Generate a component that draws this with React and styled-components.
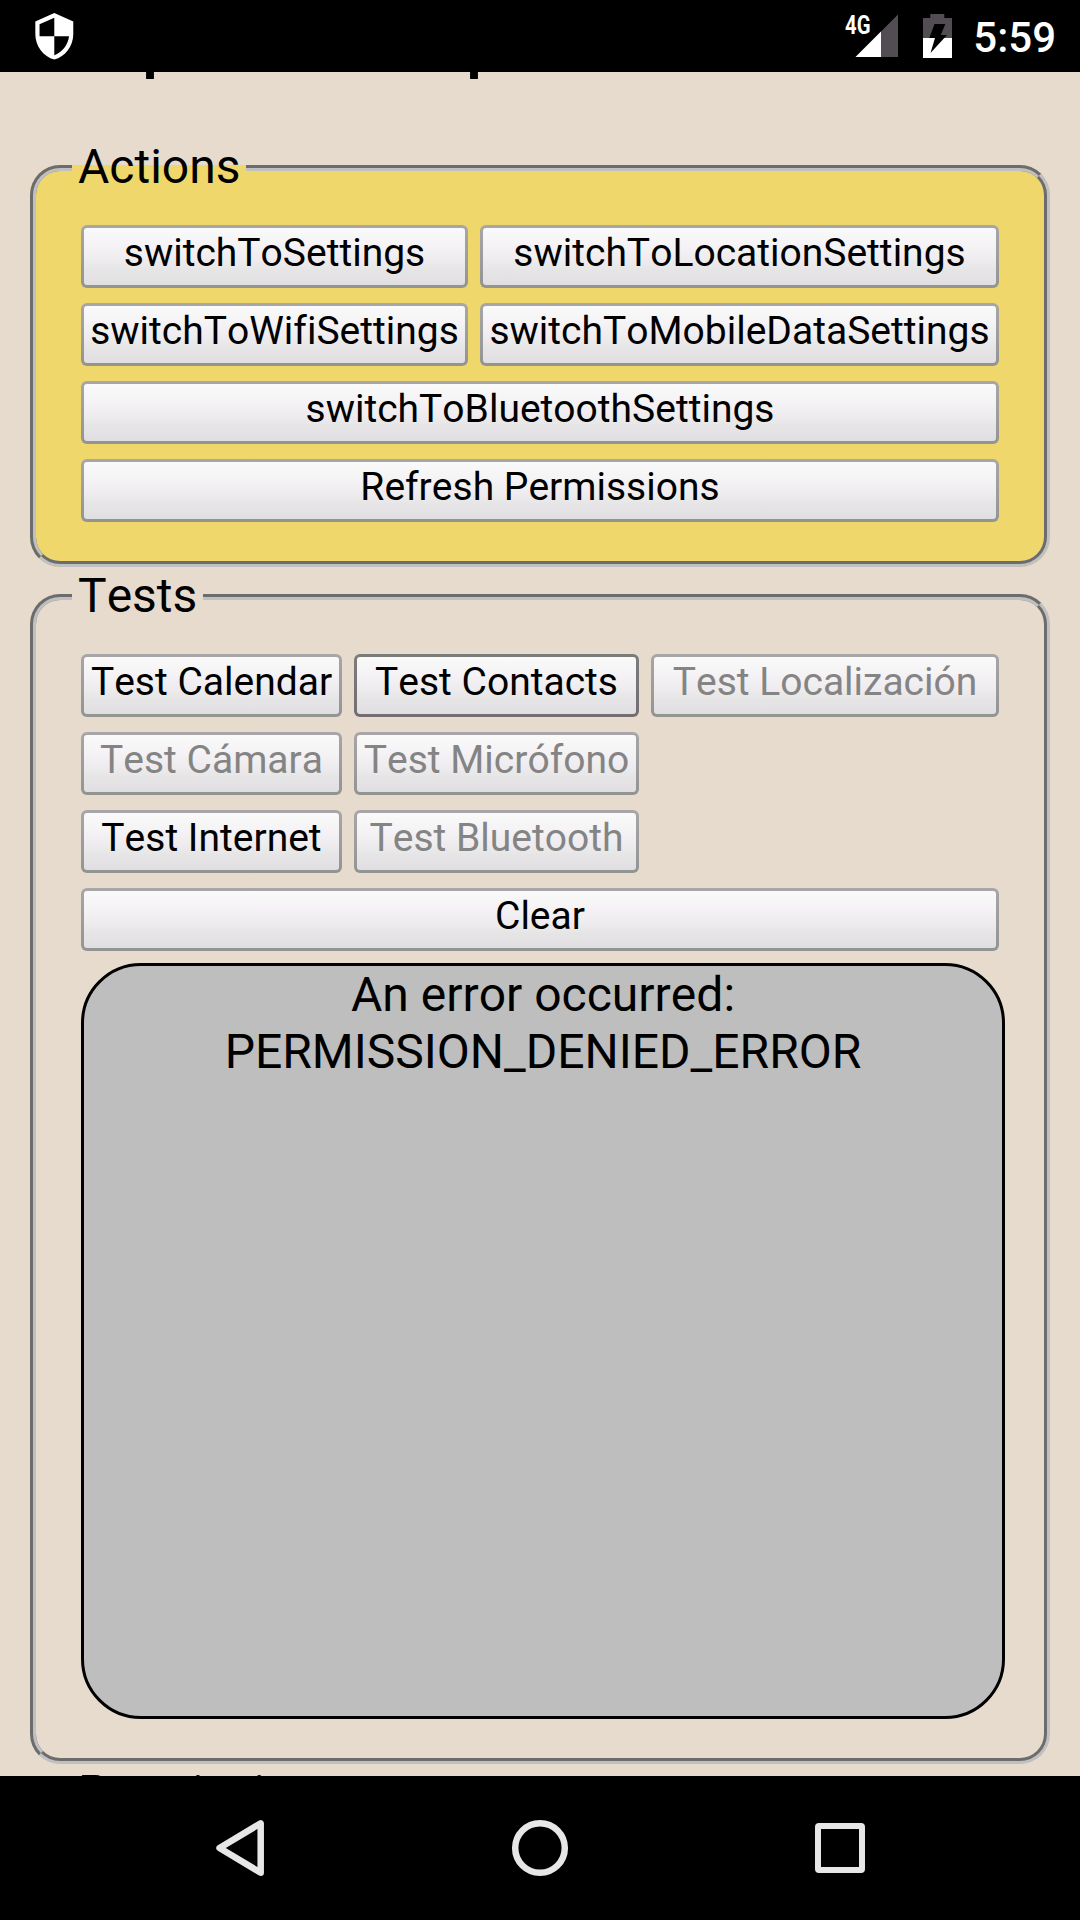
import React from "react";
import styled, { createGlobalStyle, css } from "styled-components";

const GlobalStyle = createGlobalStyle`
  *, *::before, *::after { box-sizing: border-box; }
  body {
    margin: 0;
    background: #000;
    font-family: Roboto, sans-serif;
    font-kerning: none;
    font-variant-ligatures: none;
  }
`;

const Screen = styled.div`
  display: flex;
  flex-direction: column;
  width: 1080px;
  height: 1920px;
  overflow: hidden;
  background: #000;
`;

const StatusBar = styled.header`
  display: flex;
  align-items: center;
  justify-content: space-between;
  flex: none;
  height: 72px;
  padding: 0 24px 0 29px;
  color: #fff;
`;

const StatusGroup = styled.div`
  display: flex;
  align-items: center;
  svg { display: block; }
`;

const NetworkLabel = styled.span`
  width: 10px;
  font-size: 26px;
  font-weight: 700;
  line-height: 30px;
  margin-top: -22px;
  white-space: nowrap;
  transform: scaleX(0.78);
  transform-origin: left center;
`;

const Clock = styled.span`
  margin-left: 21px;
  font-size: 42px;
  font-weight: 500;
  line-height: 48px;
  padding-top: 3px;
`;

const Page = styled.main`
  flex: none;
  height: 1704px;
  padding: 0 30px;
  overflow: hidden;
  background: #e7dbce;
`;

const Title = styled.h3`
  margin: -56px 0 58px;
  height: 66px;
  font-size: 56px;
  font-weight: 700;
  line-height: 66px;
  white-space: nowrap;
  word-spacing: 4.5px;
`;

const Panel = styled.fieldset`
  margin: 0 0 2px;
  min-width: 0;
  border: 6px groove #c0c0c0;
  border-radius: 30px;
  padding: 29px 39px 39px 45px;
  background: ${(p) => p.$fill || "transparent"};
`;

const PanelTitle = styled.legend`
  height: 56px;
  margin-left: -9px;
  padding: 0 6px 3px;
  font-size: 48px;
  line-height: 53px;
  color: #000;
`;

const ButtonGrid = styled.div`
  display: grid;
  width: 918px;
  grid-template-columns: ${(p) => p.$columns};
  gap: 15px 12px;
`;

const Button = styled.button`
  height: 63px;
  padding: 4px 0 11px;
  border: 3px solid transparent;
  border-radius: 6px;
  background:
    linear-gradient(#fafafa, #f5f3f5 30%, #eeecee 55%, #e6e5e6 75%, #e3e0e3 93%, #dedfde) padding-box,
    ${(p) => p.$pressed
      ? css`linear-gradient(#7b7d7b, #736d73) border-box`
      : css`linear-gradient(#a8a6a8, #929492) border-box`};
  font-family: inherit;
  font-size: 39px;
  line-height: 42px;
  font-kerning: none;
  font-variant-ligatures: none;
  text-align: center;
  white-space: nowrap;
  color: #000;
  ${(p) => p.$wide && css`grid-column: 1 / -1;`}
  ${(p) => p.$newRow && css`grid-column-start: 1;`}
  &:disabled { color: #848484; }
`;

const Output = styled.output`
  display: block;
  width: 924px;
  height: 756px;
  margin-top: 12px;
  border: 3px solid #000;
  border-radius: 60px;
  background: #bebebe;
  font-size: 48px;
  line-height: 57px;
  text-align: center;
`;

const NavBar = styled.nav`
  display: flex;
  align-items: center;
  justify-content: center;
  gap: 240px;
  flex: none;
  height: 144px;
  svg { display: block; }
`;

const actions = [
  { label: "switchToSettings" },
  { label: "switchToLocationSettings" },
  { label: "switchToWifiSettings" },
  { label: "switchToMobileDataSettings" },
  { label: "switchToBluetoothSettings", wide: true },
  { label: "Refresh Permissions", wide: true },
];

const tests = [
  { label: "Test Calendar" },
  { label: "Test Contacts", pressed: true },
  { label: "Test Localización", disabled: true },
  { label: "Test Cámara", disabled: true },
  { label: "Test Micrófono", disabled: true },
  { label: "Test Internet", newRow: true },
  { label: "Test Bluetooth", disabled: true },
  { label: "Clear", wide: true },
];

function Buttons({ items, columns }) {
  return (
    <ButtonGrid $columns={columns}>
      {items.map((b) => (
        <Button
          key={b.label}
          type="button"
          disabled={b.disabled}
          $wide={b.wide}
          $newRow={b.newRow}
          $pressed={b.pressed}
        >
          {b.label}
        </Button>
      ))}
    </ButtonGrid>
  );
}

const ShieldIcon = () => (
  <svg width="50.6" height="50.6" viewBox="0 0 24 24">
    <path fill="#fff" d="M12 1 3 5v6c0 5.55 3.84 10.74 9 12 5.16-1.26 9-6.45 9-12V5l-9-4Zm0 11h7c-.53 4.12-3.28 7.79-7 8.94V12H5V6.3l7-3.11V12Z" />
  </svg>
);

const SignalIcon = () => (
  <svg width="43" height="72" viewBox="855 0 43 72">
    <path fill="#524d52" d="M898 14.5V57h-42.500Z" />
    <path fill="#fff" d="M881 31.500V57h-25.500Z" />
  </svg>
);

const BatteryIcon = () => (
  <svg width="54" height="72" viewBox="898 0 54 72">
    <path fill="#524d52" d="M930.300 14h14v4h7.700v20h-29V18h7.300Z" />
    <path fill="#fff" d="M923 38h29v20h-29Z" />
    <path d="M934.500 24h10.800l-4.500 11h6.200l-16.500 18 4.500-15h-5.700Z" />
  </svg>
);

export default function App() {
  return (
    <>
      <GlobalStyle />
      <Screen>
        <StatusBar>
          <StatusGroup>
            <ShieldIcon />
          </StatusGroup>
          <StatusGroup>
            <NetworkLabel>4G</NetworkLabel>
            <SignalIcon />
            <BatteryIcon />
            <Clock>5:59</Clock>
          </StatusGroup>
        </StatusBar>
        <Page>
          <Title>Sample basic helper</Title>
          <Panel $fill="#efd76b">
            <PanelTitle>Actions</PanelTitle>
            <Buttons items={actions} columns="387px 519px" />
          </Panel>
          <Panel>
            <PanelTitle>Tests</PanelTitle>
            <Buttons items={tests} columns="261px 285px 348px" />
            <Output>An error occurred: PERMISSION_DENIED_ERROR</Output>
          </Panel>
          <Panel>
            <PanelTitle>Permissions</PanelTitle>
          </Panel>
        </Page>
        <NavBar>
          <svg width="60" height="60" viewBox="210 1818 60 60">
            <path fill="none" stroke="#e7e7e7" strokeWidth="6.500" strokeLinejoin="round" d="M219.500 1848 260.700 1823.300V1872.700Z" />
          </svg>
          <svg width="60" height="60" viewBox="0 0 60 60">
            <circle cx="30" cy="30" r="24.800" fill="none" stroke="#e7e7e7" strokeWidth="6.500" />
          </svg>
          <svg width="60" height="60" viewBox="0 0 60 60">
            <rect x="8" y="8" width="44" height="44" rx="1" fill="none" stroke="#e7e7e7" strokeWidth="6" />
          </svg>
        </NavBar>
      </Screen>
    </>
  );
}
